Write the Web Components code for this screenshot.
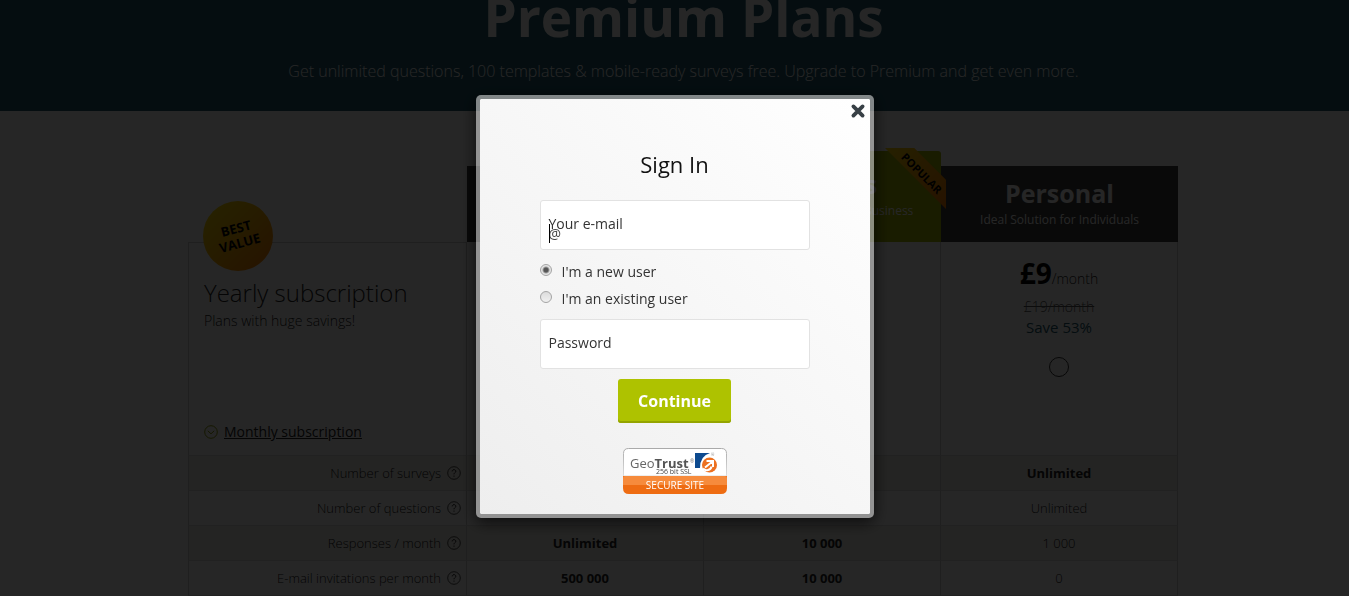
<!DOCTYPE html>
<html lang="en">
<head>
<meta charset="utf-8">
<title>Premium Plans</title>
<meta name="viewport" content="width=device-width, initial-scale=1">
<style>
    body {
        margin: 0;
        overflow: hidden;
        background: #fff;
        color: #222;
        font-family: "Open Sans", sans-serif;
        font-size: 14px;
    }
</style>
</head>
<body>
<premium-hero>
    <span slot="title">Premium Plans</span>
    Get unlimited questions, 100 templates &amp; mobile-ready surveys free. Upgrade to Premium and get even more.
</premium-hero>
<plan-table></plan-table>
<modal-overlay>
    <sign-in-form></sign-in-form>
</modal-overlay>

<script>
class PremiumHero extends HTMLElement {
    constructor() {
        super();
        this.attachShadow({mode: "open"});
    }

    static get styles() {
        return /* css */`
        :host {
            display: block;
            overflow: hidden;
            padding-left: 18px;
            background: #215a6c;
            color: #fff;
            text-align: center;
        }
        h1 {
            margin: -16px 0 0;
            font-size: 53px;
            line-height: 66px;
            font-weight: 700;
        }
        p {
            margin: 0;
            padding: 9px 0 28px;
            font-size: 16px;
            line-height: 24px;
            font-weight: 300;
        }
        `;
    }

    connectedCallback() {
        this.shadowRoot.innerHTML = /* html */`
        <style>${PremiumHero.styles}</style>
        <h1><slot name="title"></slot></h1>
        <p><slot></slot></p>`;
    }
}
customElements.define("premium-hero", PremiumHero);


class BestValue extends HTMLElement {
    constructor() {
        super();
        this.attachShadow({mode: "open"});
    }

    static get styles() {
        return /* css */`
        :host {
            display: flex;
            align-items: center;
            justify-content: center;
            width: 70px;
            height: 70px;
            border-radius: 50%;
            background: linear-gradient(135deg, #ffe600, #ffb400 50%, #ff7a00);
            color: #000;
            font-size: 13px;
            line-height: 15px;
            font-weight: 700;
            text-align: center;
        }
        span {
            transform: rotate(-15deg);
        }
        `;
    }

    connectedCallback() {
        this.shadowRoot.innerHTML = /* html */`
        <style>${BestValue.styles}</style>
        <span><slot></slot></span>`;
    }
}
customElements.define("best-value", BestValue);


class PopularRibbon extends HTMLElement {
    constructor() {
        super();
        this.attachShadow({mode: "open"});
    }

    static get styles() {
        return /* css */`
        :host {
            display: flex;
            align-items: center;
            justify-content: center;
            width: 61px;
            height: 61px;
            background: linear-gradient(135deg, #ffd800, #ff7a00);
            clip-path: polygon(0 0, 48% 0, 100% 52%, 100% 100%);
            color: #000;
            font-size: 11px;
            line-height: 14px;
            font-weight: 700;
        }
        span {
            padding-bottom: 16px;
            transform: rotate(45deg);
        }
        `;
    }

    connectedCallback() {
        this.shadowRoot.innerHTML = /* html */`
        <style>${PopularRibbon.styles}</style>
        <span><slot></slot></span>`;
    }
}
customElements.define("popular-ribbon", PopularRibbon);


class PlanHead extends HTMLElement {
    constructor() {
        super();
        this.attachShadow({mode: "open"});
    }

    static get styles() {
        return /* css */`
        :host {
            display: block;
            box-sizing: border-box;
            height: 76px;
            padding-top: 10px;
            background: #3c3c3c;
            color: #fff;
            font-weight: 400;
        }
        :host([popular]) {
            height: 91px;
            padding-top: 16px;
            border-radius: 3px 3px 0 0;
            background: #a5b800;
        }
        strong {
            display: block;
            font-size: 25px;
            line-height: 34px;
        }
        span {
            font-size: 12px;
            line-height: 18px;
        }
        `;
    }

    connectedCallback() {
        this.shadowRoot.innerHTML = /* html */`
        <style>${PlanHead.styles}</style>
        <strong><slot name="name"></slot></strong>
        <span><slot></slot></span>`;
    }
}
customElements.define("plan-head", PlanHead);


class HelpIcon extends HTMLElement {
    constructor() {
        super();
        this.attachShadow({mode: "open"});
    }

    connectedCallback() {
        this.shadowRoot.innerHTML = /* html */`
        <style>
        :host {
            display: inline-flex;
            vertical-align: -2px;
            margin-left: 6px;
        }
        </style>
        <svg width="14" height="14" viewBox="0 0 14 14" fill="none" stroke="#222">
            <circle cx="7" cy="7" r="6.3" stroke-width=".8"/>
            <path d="M5.2 5.4C5.2 3 8.8 3.100 8.800 5.300C8.800 6.700 7 6.600 7 8.300M7 9.600V10.700"/>
        </svg>`;
    }
}
customElements.define("help-icon", HelpIcon);


class PlanTable extends HTMLElement {
    constructor() {
        super();
        this.attachShadow({mode: "open"});
        this.rows = [
            ["Number of surveys", "", "", "*Unlimited"],
            ["Number of questions", "", "", "Unlimited"],
            ["Responses / month", "*Unlimited", "*10 000", "1 000"],
            ["E-mail invitations per month", "*500 000", "*10 000", "0"]
        ];
    }

    static get styles() {
        return /* css */`
        :host {
            display: block;
            box-sizing: border-box;
            max-width: 1007px;
            margin: 0 auto;
            padding: 40px 0 0 17px;
        }
        table {
            width: 100%;
            table-layout: fixed;
            border-collapse: separate;
            border-spacing: 0;
            font-size: 13px;
            text-align: center;
        }
        col:first-child {
            width: 279px;
        }
        th, td {
            box-sizing: border-box;
            padding: 0;
            border-right: 1px solid #ccc;
            border-bottom: 1px solid #ddd;
            font-weight: 300;
        }
        thead th, thead td {
            position: relative;
            height: 91px;
            vertical-align: bottom;
            border-right: 0;
            border-bottom: 0;
        }
        tbody th {
            border-left: 1px solid #ccc;
        }
        .prices > * {
            height: 214px;
            vertical-align: top;
        }
        .prices th {
            position: relative;
            padding: 32px 15px 0;
            border-top: 1px solid #ccc;
            text-align: left;
        }
        .values > * {
            height: 35px;
        }
        .values th {
            padding-right: 5px;
            text-align: right;
        }
        .values:nth-child(even) > * {
            background: #f0ede6;
        }
        .values strong {
            font-weight: 700;
        }
        best-value {
            position: absolute;
            left: 14px;
            top: -42px;
        }
        popular-ribbon {
            position: absolute;
            right: -5px;
            top: -3px;
            z-index: 1;
        }
        h2 {
            margin: 0;
            font-size: 24px;
            line-height: 36px;
            font-weight: 300;
        }
        p {
            margin: 0;
            font-size: 14px;
            line-height: 20px;
        }
        .monthly {
            display: flex;
            align-items: center;
            gap: 6px;
            margin-top: 91px;
            font-size: 14px;
            line-height: 20px;
        }
        a {
            color: inherit;
            font-weight: 400;
        }
        .price {
            padding-top: 13px;
            font-size: 14px;
            line-height: 36px;
        }
        .price strong {
            color: #000;
            font-size: 28px;
            font-weight: 700;
        }
        .old {
            color: #555;
            text-decoration: line-through;
        }
        .save {
            color: #215a6c;
            font-size: 15px;
            font-weight: 400;
        }
        input {
            appearance: none;
            width: 20px;
            height: 20px;
            margin: 20px 0 0;
            border: 1px solid #333;
            border-radius: 50%;
        }
        `;
    }

    getCell(text) {
        return text.startsWith("*")
            ? `<td><strong>${text.slice(1)}</strong></td>`
            : `<td>${text}</td>`;
    }

    getTemplateRows() {
        return this.rows
            .map(([name, ...cells]) => `
            <tr class="values">
                <th scope="row">${name}<help-icon></help-icon></th>
                ${cells.map(cell => this.getCell(cell)).join("")}
            </tr>`)
            .join("");
    }

    connectedCallback() {
        this.shadowRoot.innerHTML = /* html */`
        <style>${PlanTable.styles}</style>
        <table>
            <colgroup><col><col><col><col></colgroup>
            <thead>
                <tr>
                    <td></td>
                    <th scope="col"><plan-head></plan-head></th>
                    <th scope="col">
                        <plan-head popular><span slot="name">Business</span>Ideal Solution for Small Business</plan-head>
                        <popular-ribbon>POPULAR</popular-ribbon>
                    </th>
                    <th scope="col"><plan-head><span slot="name">Personal</span>Ideal Solution for Individuals</plan-head></th>
                </tr>
            </thead>
            <tbody>
                <tr class="prices">
                    <th scope="row">
                        <best-value>BEST<br>VALUE</best-value>
                        <h2>Yearly subscription</h2>
                        <p>Plans with huge savings!</p>
                        <div class="monthly">
                            <svg width="14" height="14" viewBox="0 0 14 14" fill="none" stroke="#8a9a00">
                                <circle cx="7" cy="7" r="6.300"/>
                                <path d="M3.800 5.800L7 8.800L10.200 5.800"/>
                            </svg>
                            <a href="#monthly">Monthly subscription</a>
                        </div>
                    </th>
                    <td></td>
                    <td></td>
                    <td>
                        <div class="price"><strong>£9</strong>/month</div>
                        <p class="old">£19/month</p>
                        <p class="save">Save 53%</p>
                        <input type="radio" name="plan" aria-label="Personal, yearly">
                    </td>
                </tr>
                ${this.getTemplateRows()}
            </tbody>
        </table>`;
    }
}
customElements.define("plan-table", PlanTable);


class ModalOverlay extends HTMLElement {
    constructor() {
        super();
        this.attachShadow({mode: "open"});
    }

    static get styles() {
        return /* css */`
        :host {
            position: fixed;
            inset: 0;
            z-index: 10;
            display: flex;
            justify-content: center;
            align-items: flex-start;
            padding-top: 95px;
            background: rgba(0, 0, 0, .85);
        }
        .box {
            position: relative;
            width: 390px;
            border: 4px solid rgba(255, 255, 255, .5);
            border-radius: 5px;
            background: linear-gradient(45deg, #eee, #fff) padding-box;
            box-shadow: 0 4px 16px rgba(0, 0, 0, .7);
        }
        button {
            position: absolute;
            top: 4px;
            right: 4px;
            display: flex;
            padding: 0;
            border: 0;
            background: none;
            cursor: pointer;
        }
        `;
    }

    connectedCallback() {
        this.shadowRoot.innerHTML = /* html */`
        <style>${ModalOverlay.styles}</style>
        <div class="box" role="dialog" aria-label="Sign In">
            <slot></slot>
            <button type="button" aria-label="Close">
                <svg width="16" height="16" viewBox="0 0 16 16" stroke="#384046" stroke-width="3.800" stroke-linecap="round">
                    <path d="M3.400 3.400L12.600 12.600M12.600 3.400L3.400 12.600"/>
                </svg>
            </button>
        </div>`;
        this.shadowRoot.querySelector("button").addEventListener("click", () => this.remove());
    }
}
customElements.define("modal-overlay", ModalOverlay);


class TrustSeal extends HTMLElement {
    constructor() {
        super();
        this.attachShadow({mode: "open"});
    }

    connectedCallback() {
        this.shadowRoot.innerHTML = /* html */`
        <style>
        :host {
            display: flex;
            justify-content: center;
        }
        svg {
            font-family: "Open Sans", sans-serif;
        }
        </style>
        <svg width="104" height="46" viewBox="0 0 104 46">
            <defs>
                <linearGradient id="edge" x2="0" y2="1">
                    <stop stop-color="#aaa"/>
                    <stop offset="1" stop-color="#ddd"/>
                </linearGradient>
            </defs>
            <path d="M.5 28V5.500Q.5.5 5.500.5H98.500Q103.500.5 103.500 5.500V28Z" fill="#fff" stroke="url(#edge)"/>
            <path d="M0 28H104V40Q104 46 98 46H6Q0 46 0 40Z" fill="#ee6c12"/>
            <path d="M0 30Q0 28 2 28H102Q104 28 104 30V37H0Z" fill="#f68b3c"/>
            <text x="7" y="20" font-size="13" fill="#666">Geo<tspan font-weight="700" fill="#555">Trust</tspan></text>
            <text x="67" y="15" font-size="5" fill="#777">®</text>
            <text x="33" y="26" font-size="7" fill="#444">256 bit SSL</text>
            <path d="M72 5H87Q77 8 77 20H72Z" fill="#0d4a8f"/>
            <text x="88" y="8" font-size="4" fill="#888">®</text>
            <circle cx="86.500" cy="17" r="7.500" fill="#ec7020"/>
            <path d="M80 20.500C82.500 23.500 88 22 88.500 18.500M82 19.500L89.500 13.500M83.500 13H90V19" fill="none" stroke="#fff" stroke-width="2"/>
            <text x="52" y="41" font-size="10" fill="#fff" text-anchor="middle">SECURE SITE</text>
        </svg>`;
    }
}
customElements.define("trust-seal", TrustSeal);


class SignInForm extends HTMLElement {
    constructor() {
        super();
        this.attachShadow({mode: "open"});
    }

    static get styles() {
        return /* css */`
        :host {
            display: block;
            color: #333;
            font-size: 14px;
            line-height: 20px;
        }
        form {
            padding: 49px 60px 20px;
        }
        h2 {
            margin: 0 0 20px;
            color: #111;
            font-size: 22px;
            line-height: 32px;
            font-weight: 400;
            text-align: center;
        }
        .field {
            position: relative;
        }
        .field label {
            position: absolute;
            left: 9px;
            top: 14px;
        }
        .field input {
            display: block;
            box-sizing: border-box;
            width: 100%;
            height: 50px;
            padding: 16px 8px 0;
            border: 1px solid #e2e2e2;
            border-radius: 3px;
            outline: 0;
            background: #fff;
            color: #333;
            font: inherit;
        }
        .field input::placeholder {
            color: #444;
        }
        /* text cursor of the focused field */
        .caret {
            position: absolute;
            left: 9px;
            top: 24px;
            width: 1px;
            height: 19px;
            background: #000;
        }
        .users {
            display: grid;
            gap: 7px;
            padding: 12px 0 10px;
        }
        .users label {
            display: flex;
            gap: 10px;
        }
        .users input {
            appearance: none;
            box-sizing: border-box;
            width: 12px;
            height: 12px;
            margin: 2px 0 0;
            border: 1px solid #a4a4a4;
            border-radius: 50%;
            background: linear-gradient(#dcdcdc, #f0f0f0);
        }
        .users input:checked {
            background: radial-gradient(circle, #555 2px, #e4e4e4 4px);
        }
        .submit {
            display: block;
            height: 44px;
            margin: 10px auto 25px;
            padding: 0 20px;
            border: 0;
            border-radius: 3px;
            background: #aec200;
            box-shadow: inset 0 -2px #94a400;
            color: #fff;
            font: 700 16px "Open Sans", sans-serif;
            cursor: pointer;
        }
        `;
    }

    connectedCallback() {
        this.shadowRoot.innerHTML = /* html */`
        <style>${SignInForm.styles}</style>
        <form>
            <h2>Sign In</h2>
            <div class="field">
                <input id="email" type="text" placeholder="@">
                <label for="email">Your e-mail</label>
                <span class="caret"></span>
            </div>
            <div class="users">
                <label><input type="radio" name="user" checked>I'm a new user</label>
                <label><input type="radio" name="user">I'm an existing user</label>
            </div>
            <div class="field">
                <input id="password" type="password">
                <label for="password">Password</label>
            </div>
            <button class="submit" type="submit">Continue</button>
            <trust-seal></trust-seal>
        </form>`;
    }
}
customElements.define("sign-in-form", SignInForm);
</script>
</body>
</html>
